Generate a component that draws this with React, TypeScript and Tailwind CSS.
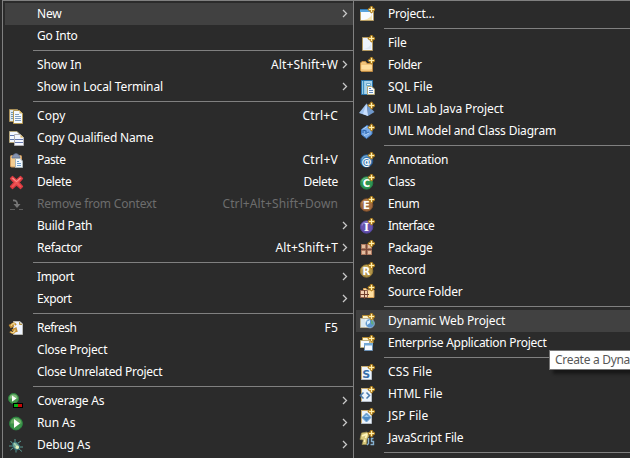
import { useLayoutEffect, useRef, useState, type ReactNode } from 'react';

const FONT = "font-['Noto_Sans','Noto_Sans_CJK_KR',sans-serif] text-[12px] leading-[22px]";

/* Spreads a label over a fixed advance width, the way the menu's hinted font does. */
function Label({ text, width, className = '' }: { text: string; width: number; className?: string }) {
  const ref = useRef<HTMLSpanElement>(null);
  const [spacing, setSpacing] = useState(0);
  useLayoutEffect(() => {
    const el = ref.current;
    if (!el) return;
    const fit = () => {
      el.style.letterSpacing = '0px';
      const natural = el.getBoundingClientRect().width;
      const s = (width - natural) / text.length;
      el.style.letterSpacing = `${s}px`;
      setSpacing(s);
    };
    fit();
    document.fonts?.ready.then(fit);
  }, [text, width]);
  return (
    <span ref={ref} className={`whitespace-pre ${className}`} style={{ letterSpacing: spacing }}>
      {text}
    </span>
  );
}

function Svg({ children }: { children: ReactNode }) {
  return <svg viewBox="0 0 16 16" className="block size-4 shrink-0">{children}</svg>;
}

const Plus = ({ x = 12.5, y = 4.5 }: { x?: number; y?: number }) => (
  <g transform={`translate(${x} ${y})`}>
    <path d="M-.5-3.5H.5L1.5-1.5 3.5-.5V.5L1.5 1.5 .5 3.5H-.5L-1.5 1.5-3.5 .5V-.5L-1.5-1.5Z" fill="#c3912b" stroke="#b5831f" strokeWidth=".7" />
    <path d="M0-2.5V2.5M-2.5 0H2.5" stroke="#fff0ae" strokeWidth="1" />
  </g>
);

const Ball = ({ c, d, l, t, serif }: { c: string; d: string; l: string; t: string; serif?: boolean }) => (
  <Svg>
    <circle cx="7.6" cy="9" r="6.2" fill={c} stroke={d} />
    <path d="M2.8 7.5a5 5 0 0 1 7-3.2" stroke={l} strokeWidth="1.2" fill="none" opacity=".6" />
    <text x="7.4" y="12.8" textAnchor="middle" fill="#fff" className={serif ? "font-['DejaVu_Serif',serif] text-[10.5px] font-bold" : "font-['DejaVu_Sans',sans-serif] text-[10px] font-bold"}>{t}</text>
    <Plus y={3.5} />
  </Svg>
);

const Page = ({ children }: { children?: ReactNode }) => (
  <Svg>
    <path d="M2.5 2.5H12.5V15.5H2.5Z" fill="#edf4fc" stroke="#b5bdc6" />
    <path d="M2.5 15V2.5H10" stroke="#c8ad72" fill="none" />
    {children}
    <Plus y={3.5} />
  </Svg>
);

const icons: Record<string, ReactNode> = {
  copy: (
    <Svg>
      <path d="M1.5 1.5H9.5V13.5H1.5Z" fill="#dfe9ec" stroke="#a88f58" />
      <path d="M3 4.5H5M3 6.5H5M3 8.5H5M3 10.5H5" stroke="#7197b8" />
      <path d="M5.5 2.5H11.5L14.5 5.5V15.5H5.5Z" fill="#f5faff" stroke="#b49850" />
      <path d="M11.5 2.5V5.5H14.5Z" fill="#d8b768" />
      <path d="M7 6.5H11M7 8.5H13M7 10.5H13M7 12.5H13" stroke="#7f9fc0" />
    </Svg>
  ),
  copyName: (
    <Svg>
      <path d="M1.5 1.5H9L11.5 4V12.5H1.5Z" fill="#f3f7ff" stroke="#b5a67c" />
      <path d="M2 5.5H10M2 9.5H10" stroke="#6378ae" />
      <path d="M6.5 4.5H12.5L15.5 7.5V15.5H6.5Z" fill="#f4f7ff" stroke="#b1b0b4" />
      <path d="M12.5 4.5V7.5H15.5Z" fill="#d8b35f" />
      <path d="M7 9.5H15M7 12.5H15" stroke="#6678ae" />
    </Svg>
  ),
  paste: (
    <Svg>
      <rect x="2.5" y="3.5" width="11" height="11.5" rx="1" fill="#f3cd93" stroke="#cf985a" />
      <path d="M4 4.5C5 4.5 5.2 1.5 8 1.5S11 4.5 12 4.5V6H4Z" fill="#8593b1" stroke="#5d6b8b" strokeWidth=".7" />
      <path d="M7.5 6.5H12L14.5 9V15.5H7.5Z" fill="#f2f8ff" stroke="#aab5b8" />
      <path d="M9 9.5H11M9 11.5H13M9 13.5H13" stroke="#6f9fcc" />
    </Svg>
  ),
  delete: (
    <Svg>
      <path d="M4.5 2.5 8.5 6 12.5 2.5 14.5 4.5 11 8.5 14.5 12.5 12.5 14.5 8.5 11 4.5 14.5 2.5 12.5 6 8.5 2.5 4.5Z" fill="#ee5454" stroke="#db3a41" strokeWidth="1.3" strokeLinejoin="round" />
      <path d="M4.5 4 8.5 7.6 12.5 4" fill="none" stroke="#f9908b" strokeWidth="1.1" />
    </Svg>
  ),
  remove: (
    <Svg>
      <path d="M5 4.5Q9 4 9.2 8" fill="none" stroke="#777" strokeWidth="1.8" />
      <path d="M5.5 8H12.5L9 12Z" fill="#777" />
      <path d="M2 13.5H7M11 13.5H15" stroke="#606060" />
    </Svg>
  ),
  refresh: (
    <Svg>
      <path d="M5.5 1.5H12L14.5 4V14.5H5.5Z" fill="#eff5ff" stroke="#bcbcb6" />
      <path d="M11.5 2V4.5H14" fill="#d9c594" stroke="#b49447" />
      <path d="M8 5Q5 1.5 3 5.5M1.5 4.5 3 7 6 5.5M2 11.5Q6 15 7.5 10M4 10.5 7.8 8.5 8.8 12" fill="none" stroke="#c28e35" strokeWidth="2" />
      <path d="M7 4.2Q4.5 2.5 3 6M3 12Q6 14 7.2 9.5" fill="none" stroke="#f5d78a" strokeWidth="1.2" />
    </Svg>
  ),
  coverage: (
    <Svg>
      <circle cx="5.5" cy="5.5" r="5" fill="#48994e" stroke="#2f8141" />
      <path d="M1.5 5.5A4 4 0 0 1 9.5 5.5" fill="#80bb7b" />
      <path d="M4 2.5 8.5 5.5 4 8.7Z" fill="#fff" />
      <path d="M5 10H15V15H5Z" fill="#000" />
      <path d="M6 11H10V14H6Z" fill="#08b515" /><path d="M10 11H14V14H10Z" fill="#c90808" />
    </Svg>
  ),
  run: (
    <Svg>
      <circle cx="8" cy="8.5" r="6.4" fill="#3b9449" stroke="#2d8542" />
      <path d="M2.5 8.5A5.5 5.5 0 0 1 13.5 8.5" fill="#80b873" opacity=".65" />
      <path d="M6 4 12 8.5 6 13Z" fill="#fff" />
    </Svg>
  ),
  debug: (
    <Svg>
      <path d="M5 7 2.5 4M7 5V2M10 6 13 4M5 9H1M5 11 2.5 13M8 13V15.5M11 10H15M11 12 14 14.5" stroke="#5b9b93" fill="none" />
      <ellipse cx="8" cy="9" rx="3" ry="4.2" transform="rotate(-35 8 9)" fill="#6da194" stroke="#326872" />
      <path d="M6 6 10 11" stroke="#a6d1ad" strokeWidth="1.4" /><circle cx="9.3" cy="10.2" r="1.7" fill="#e5f3bd" />
    </Svg>
  ),
  project: (
    <Svg>
      <path d="M1.5 3.5H14.5V14.5H1.5Z" fill="#f8fbff" stroke="#b89e64" />
      <path d="M1 3H12V6H1Z" fill="#58a3dc" /><path d="M1 3.5H11" stroke="#2f79b6" />
      <path d="M5 14Q12 12 13 8V14Z" fill="#f5e4b0" />
      <Plus y={3.5} />
    </Svg>
  ),
  file: (
    <Svg>
      <path d="M3.5 2.5H13.5V15.5H3.5Z" fill="#edf4fd" stroke="#b49a60" />
      <path d="M5 14H12V9Q10 13 5 14Z" fill="#dce7f4" />
      <Plus y={3.5} />
    </Svg>
  ),
  folder: (
    <Svg>
      <path d="M1.5 13.5V6L3 4.5H6.5L8 6.5H13.5V14.5H2.5Z" fill="#f2c47a" stroke="#bd8941" />
      <path d="M2.5 8H13V12Q8 13 2.5 12Z" fill="#ffdf9f" />
      <Plus y={3.5} />
    </Svg>
  ),
  sql: (
    <Svg>
      <path d="M2.5 1.5H13.5V15.5H2.5Z" fill="#a9d4ec" stroke="#2874ac" />
      <path d="M4.5 2V15" stroke="#3f91c2" strokeWidth="1.3" /><path d="M7.5 4.5H11.5V6.5H7.5Z" fill="#e8f7ff" stroke="#69a9cd" />
      <path d="M8.5 7.5H12.5L15.5 10V15.5H8.5Z" fill="#f8fbff" stroke="#b6aa79" />
      <path d="M10 9.5H12M10 11.5H14M10 13.5H14" stroke="#638bbb" />
    </Svg>
  ),
  uml: (
    <Svg>
      <path d="M7.5 2.5 0 12 9 15Z" fill="#9fc3ef" /><path d="M7.5 2.5 9 15 15.5 11Z" fill="#7099cb" />
      <path d="M7.5 2.5 4 13 9 15Z" fill="#c8dfff" />
      <Plus />
    </Svg>
  ),
  umlModel: (
    <Svg>
      <path d="M2.5 6.5 8 2.5 13 5V11L7.5 15.5 2.5 11.5Z" fill="#79abe9" stroke="#427cc4" />
      <path d="M4 10V7L7 8V11L10 9" stroke="#2c65ad" strokeWidth="1.1" fill="none" />
      <path d="M3.5 6.5 8 3.5M5 12.5 10 10" stroke="#b7d8fc" fill="none" />
      <Plus />
    </Svg>
  ),
  annotation: <Ball c="#3c79b1" d="#215587" l="#99c4e6" t="@" />,
  class: <Ball c="#2e9654" d="#267f48" l="#90d49d" t="C" />,
  enum: <Ball c="#a26c40" d="#82502b" l="#d5a66e" t="E" />,
  interface: <Ball c="#6753ae" d="#51439a" l="#aaa0df" t="I" serif />,
  record: <Ball c="#b2954a" d="#907734" l="#dfcd7b" t="R" />,
  package: (
    <Svg>
      <path d="M2 4H13V15H2Z" fill="#794b3c" />
      <path d="M2.5 4.5H6.5V8.5H2.5ZM8.5 4.5H12.5V8.5H8.5ZM2.5 10.5H6.5V14.5H2.5ZM8.5 10.5H12.5V14.5H8.5Z" fill="#e4bfa1" stroke="#ae7a61" />
      <Plus y={3.5} />
    </Svg>
  ),
  source: (
    <Svg>
      <path d="M4.5 12V4.5H7L8.5 6H15V13.5H4.5Z" fill="#ffdfa0" stroke="#d9a054" />
      <path d="M1.5 6.5H8.5V13.5H1.5Z" fill="#f3d0b3" stroke="#91614b" />
      <path d="M5.5 6V15M1 10.5H10" stroke="#713f2c" />
      <Plus y={3.5} />
    </Svg>
  ),
  dynamic: (
    <Svg>
      <path d="M3.5 2.5H14V8H3.5Z" fill="#fff5cd" stroke="#b48b30" />
      <path d="M1.5 5.5H11.5V14.5H1.5Z" fill="#eef5f8" stroke="#bbb49b" />
      <path d="M2 6H6V14H2Z" fill="#dbe9f0" />
      <circle cx="11" cy="10.5" r="4.4" fill="#5a95cf" stroke="#a7c4da" strokeWidth=".7" />
      <path d="M12 7Q15 8 14.5 12L12 11Z" fill="#62a982" />
      <path d="M8 12V8.5L11 7V10Z" fill="#d7efff" />
      <Plus y={3.5} />
    </Svg>
  ),
  enterprise: (
    <Svg>
      <path d="M3.5 2.5H14V8H3.5Z" fill="#fff5cd" stroke="#b48b30" />
      <path d="M1.5 5.5H10.5V12.5H1.5Z" fill="#f7fbff" stroke="#bdae7d" />
      <path d="M5.5 8.5H13.5V15.5H5.5Z" fill="#f7fbff" stroke="#6b91b6" />
      <path d="M5 8H14V10.5H5Z" fill="#73a9d7" />
      <Plus y={3.5} />
    </Svg>
  ),
  css: <Page><text x="7.2" y="13.6" textAnchor="middle" fill="#356fa9" className="font-['DejaVu_Sans',sans-serif] text-[11px] font-bold">S</text></Page>,
  html: <Page><path d="M4.5 6.5 1.5 9.5 4.5 12.5M7.5 6.5 10.5 9.5 7.5 12.5" stroke="#4b7bad" strokeWidth="1.5" fill="none" /></Page>,
  jsp: <Page><path d="M7.5 5 12 9.5 7.5 14 3 9.5Z" fill="#4e8bc6" stroke="#79a7d2" /><path d="M5 9 7.5 6.5 10 9Z" fill="#9bcbf2" /></Page>,
  js: (
    <Svg>
      <path d="M2.5 3 8 2 10 6 8 9 7.5 14.5H3L4.5 10 1 9.5Z" fill="#d9c97d" stroke="#9e904f" strokeWidth=".7" />
      <path d="M3 6 8 4 6.5 8M5.5 9.5V12" fill="none" stroke="#fff6bd" strokeWidth="1.6" />
      <path d="M9.5 8V13.5L8 15M14.5 8.5H12.5V11.5H14.5V14.5H11.5" stroke="#86b0d0" strokeWidth="1.4" fill="none" />
      <Plus y={3.5} />
    </Svg>
  ),
};

type Item = { t: string; w: number; icon?: string; key?: string; kw?: number; sub?: boolean; off?: boolean; on?: boolean } | null;

const left: Item[] = [
  { t: 'New', w: 24.5, sub: true, on: true },
  { t: 'Go Into', w: 40.5 },
  null,
  { t: 'Show In', w: 44.5, key: 'Alt+Shift+W', kw: 67, sub: true },
  { t: 'Show in Local Terminal', w: 126, sub: true },
  null,
  { t: 'Copy', w: 28.5, icon: 'copy', key: 'Ctrl+C', kw: 35.5 },
  { t: 'Copy Qualified Name', w: 116.3, icon: 'copyName' },
  { t: 'Paste', w: 28.5, icon: 'paste', key: 'Ctrl+V', kw: 35.5 },
  { t: 'Delete', w: 34.5, icon: 'delete', key: 'Delete', kw: 34.5 },
  { t: 'Remove from Context', w: 119.3, icon: 'remove', key: 'Ctrl+Alt+Shift+Down', kw: 115.5, off: true },
  { t: 'Build Path', w: 55.2, sub: true },
  { t: 'Refactor', w: 45, key: 'Alt+Shift+T', kw: 62.5, sub: true },
  null,
  { t: 'Import', w: 37, sub: true },
  { t: 'Export', w: 34.5, sub: true },
  null,
  { t: 'Refresh', w: 39.5, icon: 'refresh', key: 'F5', kw: 13.5 },
  { t: 'Close Project', w: 70.3 },
  { t: 'Close Unrelated Project', w: 125.2 },
  null,
  { t: 'Coverage As', w: 67.3, icon: 'coverage', sub: true },
  { t: 'Run As', w: 38.3, icon: 'run', sub: true },
  { t: 'Debug As', w: 53.3, icon: 'debug', sub: true },
];

const right: Item[] = [
  { t: 'Project...', w: 46.5, icon: 'project' },
  null,
  { t: 'File', w: 18.5, icon: 'file' },
  { t: 'Folder', w: 33.5, icon: 'folder' },
  { t: 'SQL File', w: 44.5, icon: 'sql' },
  { t: 'UML Lab Java Project', w: 115.5, icon: 'uml' },
  { t: 'UML Model and Class Diagram', w: 168, icon: 'umlModel' },
  null,
  { t: 'Annotation', w: 60.2, icon: 'annotation' },
  { t: 'Class', w: 27.3, icon: 'class' },
  { t: 'Enum', w: 31.3, icon: 'enum' },
  { t: 'Interface', w: 46.3, icon: 'interface' },
  { t: 'Package', w: 44.3, icon: 'package' },
  { t: 'Record', w: 37.5, icon: 'record' },
  { t: 'Source Folder', w: 74.5, icon: 'source' },
  null,
  { t: 'Dynamic Web Project', w: 117.3, icon: 'dynamic', on: true },
  { t: 'Enterprise Application Project', w: 158.5, icon: 'enterprise' },
  null,
  { t: 'CSS File', w: 44.3, icon: 'css' },
  { t: 'HTML File', w: 54.5, icon: 'html' },
  { t: 'JSP File', w: 40.5, icon: 'jsp' },
  { t: 'JavaScript File', w: 75.5, icon: 'js' },
  null,
];

function Menu({ items }: { items: Item[] }) {
  return (
    <div className="flex flex-col">
      {items.map((item, i) =>
        item === null ? (
          <div key={i} className="ml-7 flex h-[7px] items-center"><div className="h-px w-full bg-[#808080]" /></div>
        ) : (
          <div key={i} className={`flex h-[22px] items-center pl-[3px] ${item.on ? 'bg-[#414141]' : ''} ${item.off ? 'text-[#6d6d6d]' : 'text-white'}`}>
            <div className="mr-[13px] size-4 shrink-0">{item.icon && icons[item.icon]}</div>
            <Label text={item.t} width={item.w} />
            <div className="flex-1" />
            {item.key && <Label text={item.key} width={item.kw ?? 0} className={item.sub ? 'mr-[3px]' : 'mr-[15px]'} />}
            {item.sub && (
              <svg viewBox="0 0 12 12" className="size-3 shrink-0"><path d="M2 2 5.5 5.5 2 9" fill="none" stroke="#c8c8c8" strokeWidth="1.3" /></svg>
            )}
          </div>
        ),
      )}
    </div>
  );
}

export default function App() {
  return (
    <div className={`relative flex h-[458px] w-[630px] overflow-hidden bg-[#2b2b2b] ${FONT}`}>
      <div className="w-[353px] shrink-0 pl-0.5">
        <div className="h-[458px] border-l border-t border-[#808080] pl-0.5 pt-0.5"><Menu items={left} /></div>
      </div>
      <div className="h-[458px] w-[277px] border-l border-t border-[#808080] pl-0.5 pt-0.5"><Menu items={right} /></div>
      <div className="absolute left-[549px] top-[350px] flex h-5 w-[81px] items-center border border-r-0 border-[#767676] bg-white pl-[5px] leading-[18px] text-[#575757] shadow-[4px_4px_3px_rgba(0,0,0,0.45)]">
        <Label text="Create a Dyna" width={75} />
      </div>
    </div>
  );
}
